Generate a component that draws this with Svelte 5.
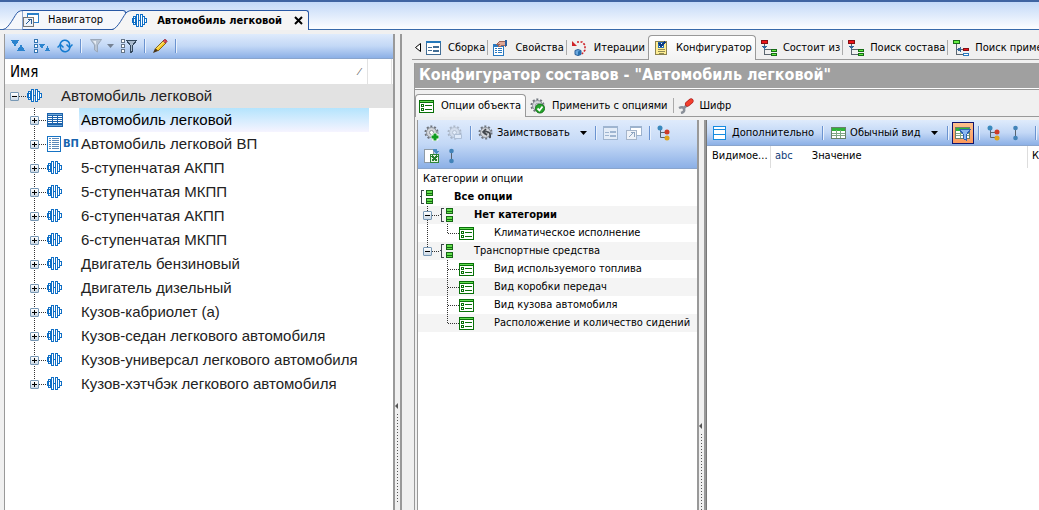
<script>
  // Product structure viewer: object tree on the left, option configurator on the right.
  const parts = [
    { name: 'Автомобиль легковой', icon: 'spec', selected: true },
    { name: 'Автомобиль легковой ВП', icon: 'sheet', badge: 'ВП' },
    { name: '5-ступенчатая АКПП', icon: 'part' },
    { name: '5-ступенчатая МКПП', icon: 'part' },
    { name: '6-ступенчатая АКПП', icon: 'part' },
    { name: '6-ступенчатая МКПП', icon: 'part' },
    { name: 'Двигатель бензиновый', icon: 'part' },
    { name: 'Двигатель дизельный', icon: 'part' },
    { name: 'Кузов-кабриолет (а)', icon: 'part' },
    { name: 'Кузов-седан легкового автомобиля', icon: 'part' },
    { name: 'Кузов-универсал легкового автомобиля', icon: 'part' },
    { name: 'Кузов-хэтчбэк легкового автомобиля', icon: 'part' },
  ];

  const views = [
    { name: 'Сборка', icon: 'form' },
    { name: 'Свойства', icon: 'props' },
    { name: 'Итерации', icon: 'iter' },
    { name: 'Конфигуратор', icon: 'config' },
    { name: 'Состоит из', icon: 'consists' },
    { name: 'Поиск состава', icon: 'consists' },
    { name: 'Поиск приме', icon: 'usage' },
  ];

  const pages = [
    { name: 'Опции объекта', icon: 'option' },
    { name: 'Применить с опциями', icon: 'gearok' },
    { name: 'Шифр', icon: 'wrench' },
  ];

  const options = [
    { name: 'Все опции', level: 0, bold: true },
    { name: 'Нет категории', level: 1, bold: true },
    { name: 'Климатическое исполнение', level: 2, last: true },
    { name: 'Транспортные средства', level: 1, last: true },
    { name: 'Вид используемого топлива', level: 2, final: true },
    { name: 'Вид коробки передач', level: 2, final: true },
    { name: 'Вид кузова автомобиля', level: 2, final: true },
    { name: 'Расположение и количество сидений', level: 2, last: true, final: true },
  ];

  const smooth = ['refresh', 'pencil', 'iter', 'gearok', 'wrench', 'gearadd', 'geardel', 'borrow', 'nodes', 'link', 'funnel'];

  let view = $state('Конфигуратор');
  let page = $state('Опции объекта');
</script>

{#snippet gear()}
  <circle cx="7.500" cy="7.500" r="6" fill="none" stroke="#6f747c" stroke-width="2" stroke-dasharray="2 1.77" />
  <circle cx="7.500" cy="7.500" r="5" fill="#d3d6db" stroke="#8b9098" />
  <circle cx="7.500" cy="7.500" r="2" fill="#fff" stroke="#8b9098" />
{/snippet}

{#snippet icon(name)}
  <svg class="icon" class:crisp={!smooth.includes(name)} width="16" height="16" viewBox="0 0 16 16" aria-hidden="true">
    {#if name === 'part'}
      <g fill="#fff" stroke="#0f6fc6">
        <path d="M1.500 3.500h2v8h-2zM10.500 3.500h2v8h-2zM12.500 5.500h2v4h-2z" />
        <path d="M0 5.500h3M0 9.500h3M.5 5v5M3 7.500h8" />
        <rect x="4.500" y="1.500" width="2" height="12" />
        <rect x="8.500" y="1.500" width="2" height="12" />
      </g>
    {:else if name === 'spec'}
      <path fill="#1d63ab" d="M0 1h16v14H0z" />
      <path fill="#6ea7d8" d="M1 2h14v1H1zM1 13h14v1H1z" />
      <path stroke="#fff" d="M1 4.500h4M6 4.500h4M11 4.500h4M1 6.500h4M6 6.500h4M11 6.500h4M1 8.500h4M6 8.500h4M11 8.500h4M1 10.500h4M6 10.500h4M11 10.500h4" />
    {:else if name === 'sheet'}
      <path fill="#fff" stroke="#1673c4" d="M.5.500h13v15H.5z" />
      <path stroke="#5b89ba" d="M2 2.500h2M5 2.500h7M2 4.500h2M5 4.500h7M2 6.500h2M5 6.500h7M2 8.500h2M5 8.500h7M2 10.500h2M5 10.500h7M2 12.500h2M5 12.500h7" />
    {:else if name === 'nav' || name === 'navoff'}
      {@const c = name === 'nav' ? '#2b7fc8' : '#9cb2cd'}
      <path fill="#fff" stroke={c} d="M4.500 1.500h11v9h-11z" />
      <path fill={c} d="M4 1h12v2H4z" />
      <path fill="#eef2f8" stroke={name === 'nav' ? '#777' : '#a5b5ca'} d="M.5 5.500h10v9H.5z" />
      <path fill="none" stroke={name === 'nav' ? '#245a92' : '#8fa5c0'} d="M3 12l5-5M4.500 7.500h4v4" />
    {:else if name === 'sort'}
      <path fill="#2b84cf" d="M0 2h8l-4 7zM6 13h8l-4-7z" />
    {:else if name === 'sortlist'}
      <path fill="#fff" stroke="#3577b3" d="M.5 1.500h3v3h-3zM.5 6.500h3v3h-3zM.5 11.500h3v3h-3z" />
      <path fill="#2b84cf" d="M5 6h6l-3 5zM11 13h5l-2.500-5z" />
    {:else if name === 'refresh'}
      <path fill="none" stroke="#147bd0" stroke-width="1.500" d="M3 7a5 5.500 0 0 1 9.500-1.500V9M13 9a5 5.500 0 0 1-9.500 1.500V7" />
      <path fill="none" stroke="#147bd0" stroke-width="1.500" d="M9.500 6.500l3 3 3-3M.5 9.500l3-3 3 3" />
    {:else if name === 'funnel'}
      <path fill="#b9c4d2" stroke="#9ba8b9" d="M2.500 1.500h11L9.500 7v7l-3-2V7z" />
      <path fill="#e8edf3" d="M5 3h3v4z" />
    {:else if name === 'filterlist'}
      <path fill="#fff" stroke="#667587" d="M.5 1.500h3v3h-3zM.5 6.500h3v3h-3zM.5 11.500h3v3h-3z" />
      <path fill="#a9bacd" stroke="#34495e" d="M5.500 2.500h10l-4 5v6l-2 1v-7z" />
    {:else if name === 'pencil'}
      <path fill="#f5c928" stroke="#8a6415" d="M3.500 10.500l8-8 2.500 2.500-8 8z" />
      <path fill="#4a3416" d="M1 15l2-4.500L6 13z" />
      <path fill="#df4052" stroke="#9a3040" d="M11 3l1.500-1.500Q14 1 15 3.500L13.500 5z" />
      <path stroke="#fff19d" d="M5 10.500l7-7" />
    {:else if name === 'form' || name === 'formoff'}
      {@const c = name === 'form' ? '#426d94' : '#9fb5d0'}
      <path fill={name === 'form' ? '#fff' : '#e4edf8'} stroke={c} d="M.5 1.500h14v13H.5z" />
      <path fill={name === 'form' ? '#2478ba' : c} d="M0 1h15v2H0z" />
      <path fill="none" stroke={c} d="M2 7.500h4M2 10.500h4M7.500 6.500h5v1h-5zM7.500 10.500h5v1h-5z" />
    {:else if name === 'props'}
      <path fill="#fff" stroke="#2979c0" d="M.5 4.500h10v11H.5z" />
      <path fill="#2979c0" d="M0 4h11v3H0z" />
      <path stroke="#2979c0" d="M2 8.500h2M5 8.500h4M2 10.500h2M5 10.500h4M2 12.500h2M5 12.500h4" />
      <path fill="#e0a896" stroke="#9a6257" d="M4 4l3-3h5v5l-3-1-2 2-2-1 2-2z" />
      <path fill="#295fa1" d="M12 0h2v6h-2z" />
    {:else if name === 'iter'}
      <path fill="none" stroke="#cf2429" stroke-width="1.600" stroke-dasharray="2 1.500" d="M5 2h5l3 3v5l-3 4" />
      <path fill="#cf2429" d="M0 1v5h5z" />
      <path fill="#69a8df" stroke="#285d98" d="M3 10.500l3-1 3 1v4l-3 1-3-1z" />
      <path fill="#276fae" d="M6 11.500l3-1v4l-3 1z" />
    {:else if name === 'config'}
      <path fill="#ffee93" stroke="#8d8350" d="M1.500 1.500h11v13h-11z" />
      <path fill="#fff" stroke="#2670b5" d="M4.500 2.500h5v5h-5z" />
      <path fill="none" stroke="#0b3b85" stroke-width="2" d="M5 3l2 3 4-4" />
      <path stroke="#8f8b55" d="M4 9.500h7M4 11.500h7M5 13.500h5" />
    {:else if name === 'consists' || name === 'usage'}
      <path fill="none" stroke="#5b6670" d="M3.500 4v10.500H10M3.500 9.500H10" />
      {#if name === 'consists'}
        <path fill="#f0151b" stroke="#830f13" d="M.5.500h6v3h-6z" />
        <path fill="#32699e" d="M1 6h5l-2.500 4z" />
        <path fill="#65ed42" stroke="#176d17" d="M10.500 9.500h5v2h-5zM10.500 13.500h5v2h-5z" />
      {:else}
        <path fill="#65ed42" stroke="#176d17" d="M.5.500h6v3h-6z" />
        <path fill="#32699e" d="M4 9.500l4-3v6z" />
        <path fill="#f0151b" stroke="#830f13" d="M10.500 8.500h5v2h-5z" />
        <path fill="#fff" stroke="#287ac0" d="M10.500 13.500h5v2h-5z" />
      {/if}
    {:else if name === 'option'}
      <path fill="#fff" stroke="#087008" d="M.5 2.500h14v12H.5z" />
      <path fill="#62dc51" stroke="#087008" d="M.5 2.500h14v2H.5z" />
      <path fill="#fff" stroke="#087008" d="M2.500 6.500h2v2h-2zM2.500 10.500h2v2h-2zM6 7.500h7M6 11.500h7" />
    {:else if name === 'group'}
      <path fill="none" stroke="#3e464d" d="M5 1.500H2.500v6H1M2.500 7v7.500H5" />
      <path fill="#63df4b" stroke="#176717" d="M7.500 1.500h6v3h-6zM7.500 4.500h6v2h-6zM7.500 9.500h6v3h-6zM7.500 12.500h6v2h-6z" />
    {:else if name === 'gearok'}
      {@render gear()}
      <circle cx="10" cy="10.500" r="4.500" fill="#24a62b" stroke="#137018" />
      <path fill="none" stroke="#fff" stroke-width="1.800" d="M7.500 10.500l2 2 3-4" />
    {:else if name === 'gearadd'}
      {@render gear()}
      <path stroke="#fff" stroke-width="5" d="M7 12h8M11 8v8" />
      <path stroke="#119c20" stroke-width="3" d="M7.500 12h7M11 8.500v7" />
    {:else if name === 'geardel'}
      <g opacity=".4">{@render gear()}<path fill="#fff" stroke="#8292a5" d="M7.500 9.500h7v4h-7z" /></g>
    {:else if name === 'borrow'}
      {@render gear()}
      <path fill="none" stroke="#41464c" stroke-width="1.600" d="M12 13c1-5-1-7-6-6M8 4L5 7l4 3" />
    {:else if name === 'wrench'}
      <path fill="none" stroke="#8a9099" stroke-width="2.500" d="M9 7l-4 4M1 10q4-2 5 1t-3 4" />
      <path stroke="#a91919" stroke-width="5" stroke-linecap="round" d="M9.500 6l3.500-3" />
      <path stroke="#f2402e" stroke-width="4" stroke-linecap="round" d="M9.500 6l3.500-3" />
    {:else if name === 'nodes'}
      <path fill="none" stroke="#59636d" d="M3.500 3v9.500H10M3.500 7.500H10" />
      <circle cx="3" cy="3" r="2.500" fill="#3a89bd" />
      <circle cx="10" cy="7" r="2.500" fill="#cf3b27" />
      <circle cx="10" cy="13" r="2.500" fill="#dfa31a" />
    {:else if name === 'link'}
      <path stroke="#59636d" d="M4.500 3v10" />
      <circle cx="4.500" cy="3" r="2.300" fill="#4283b8" />
      <circle cx="4.500" cy="13" r="2.300" fill="#4283b8" />
    {:else if name === 'excel'}
      <path fill="#fff" stroke="#8f9ba6" d="M.5 1.500h9v13h-9z" />
      <path fill="#4a8dc4" d="M9 1h4v2h2l-3 3-3-3z" />
      <path fill="#e9f5e5" stroke="#308638" d="M6.500 6.500h8v8h-8z" />
      <path stroke="#267c2e" stroke-width="2" d="M8 8l5 5M13 8l-5 5" />
    {:else if name === 'panel'}
      <path fill="#fff" stroke="#168be0" d="M.5 1.500h12v13H.5z" />
      <path stroke="#168be0" d="M0 4.500h13M0 9.500h13" />
    {:else if name === 'grid' || name === 'gridfilter'}
      <path fill="#fff" stroke="#68806b" d="M.5 2.500h14v11H.5z" />
      <path fill="#2eb438" d="M1 3h13v3H1z" />
      <path fill="none" stroke="#7fa684" d="M1 8.500h13M1 10.500h13M5.500 5v8M9.500 5v8" />
      {#if name === 'gridfilter'}
        <path fill="#8ab8f0" stroke="#2b62b4" d="M4.500 4.500h11l-4 5v6l-3-2v-4z" />
      {/if}
    {/if}
  </svg>
{/snippet}

{#snippet tool(name, label)}
  <button class="tool" aria-label={label} title={label}>{@render icon(name)}</button>
{/snippet}

{#snippet arrow()}
  <svg class="arrow" width="7" height="4" viewBox="0 0 7 4" aria-hidden="true"><path d="M0 0h7L3.500 4z" /></svg>
{/snippet}

<div class="window">
  <nav class="docs">
    <span class="lead"></span>
    <button class="doc">
      <svg class="slope" width="20" height="20" viewBox="0 0 20 20"><path d="M0 19.500C6 19 12 4 15 2Q17 .5 20 .5V20H0z" /></svg>
      <span class="doc-body first">{@render icon('nav')}Навигатор</span>
    </button>
    <button class="doc active">
      <svg class="slope" width="20" height="20" viewBox="0 0 20 20"><path class="fill" d="M0 20C6 19 12 4 15 2Q17 .5 20 .5V20z" /><path class="line" d="M0 19.500C6 19 12 4 15 2Q17 .5 20 .5" /></svg>
      <span class="doc-body">{@render icon('part')}Автомобиль легковой
        <svg class="close" width="9" height="9" viewBox="0 0 9 9" aria-hidden="true"><path d="M1 1l7 7M8 1L1 8" /></svg>
      </span>
    </button>
    <span class="rest"></span>
  </nav>

  <main>
    <section class="structure">
      <div class="toolbar compact">
        {@render tool('sort', 'Сортировка')}
        {@render tool('sortlist', 'Сортировка списка')}
        {@render tool('refresh', 'Обновить')}
        <i class="sep"></i>
        <button class="tool text faded" aria-label="Фильтр">{@render icon('funnel')}{@render arrow()}</button>
        {@render tool('filterlist', 'Фильтр списка')}
        <i class="sep"></i>
        {@render tool('pencil', 'Изменить')}
        <i class="sep"></i>
      </div>
      <div class="name-head"><span class="col">Имя <em>⁄</em></span></div>
      <ul class="tree">
        <li class="root">
          <button class="expander" aria-label="Свернуть"></button><i class="dots"></i>
          {@render icon('part')}
          <span class="name">Автомобиль легковой</span>
        </li>
        {#each parts as p, i}
          <li class:selected={p.selected} class:end={i === parts.length - 1}>
            <span class="guide"><button class="expander plus" aria-label="Развернуть"></button></span><i class="dots"></i>
            {@render icon(p.icon)}
            <b class="badge">{p.badge ?? ''}</b>
            <span class="name">{p.name}</span>
          </li>
        {/each}
      </ul>
    </section>

    <div class="splitter"><span class="grip"></span></div>

    <section class="viewer">
      <div class="tabs views">
        <svg class="back" width="6" height="9" viewBox="0 0 6 9" aria-hidden="true"><path d="M5.500 .5v8l-5-4z" /></svg>
        {#each views as v}
          <button class="tab" class:on={view === v.name} onclick={() => (view = v.name)}>
            {@render icon(v.icon)}<span>{v.name}</span>
          </button>
        {/each}
      </div>

      <div class="frame">
        <h1>Конфигуратор составов - "Автомобиль легковой"</h1>
        <div class="tabs pages">
          {#each pages as p}
            <button class="tab" class:on={page === p.name} onclick={() => (page = p.name)}>
              {@render icon(p.icon)}<span>{p.name}</span>
            </button>
          {/each}
        </div>

        <div class="panes">
          <section class="options">
            <div class="toolbar wrap">
              {@render tool('gearadd', 'Добавить')}
              {@render tool('geardel', 'Удалить')}
              <i class="sep"></i>
              <button class="tool text">{@render icon('borrow')}<span>Заимствовать</span>{@render arrow()}</button>
              <i class="sep"></i>
              {@render tool('formoff', 'Карточка')}
              {@render tool('navoff', 'Открыть')}
              <i class="sep"></i>
              {@render tool('nodes', 'Структура')}
              {@render tool('excel', 'Экспорт')}
              {@render tool('link', 'Связи')}
            </div>
            <div class="options-head">Категории и опции</div>
            <ul class="options-list">
              {#each options as o}
                <li class="l{o.level}" class:bold={o.bold} class:last={o.last} class:final={o.final}>
                  {#if o.level === 1}
                    <span class="guide"><button class="expander" aria-label="Свернуть"></button></span><i class="dots"></i>
                  {:else if o.level === 2}
                    <span class="outer"></span><span class="guide inner"></span><i class="dots long"></i>
                  {/if}
                  {@render icon(o.level === 2 ? 'option' : 'group')}
                  <span class="name">{o.name}</span>
                </li>
              {/each}
            </ul>
          </section>

          <div class="splitter"><span class="grip low"></span></div>

          <section class="values">
            <div class="toolbar">
              <button class="tool text">{@render icon('panel')}<span>Дополнительно</span></button>
              <i class="sep"></i>
              <button class="tool text">{@render icon('grid')}<span>Обычный вид</span>{@render arrow()}</button>
              <span class="toggle">
                <i class="sep"></i>
                <button class="tool pressed" aria-label="Фильтр значений" aria-pressed="true">{@render icon('gridfilter')}</button>
                <i class="sep"></i>
              </span>
              {@render tool('nodes', 'Структура')}
              {@render tool('link', 'Связи')}
              <i class="sep"></i>
            </div>
            <table>
              <thead>
                <tr><th class="visible">Видимое...</th><th class="value"><span class="abc">abc</span>Значение</th><th>К</th></tr>
              </thead>
            </table>
          </section>
        </div>
      </div>
    </section>
  </main>
</div>

<style>
  :global(body) { background: #f0f0f0; }
  .window {
    display: flex; flex-direction: column; height: 100vh; overflow: hidden; color: #000;
    font: 11px/16px Tahoma, "DejaVu Sans Condensed", "Noto Sans", sans-serif;
  }
  button { margin: 0; padding: 0; border: 0; background: none; font: inherit; color: inherit; white-space: nowrap; }
  ul { margin: 0; padding: 0; list-style: none; }
  svg { display: block; flex: none; }
  .crisp { shape-rendering: crispEdges; }

  /* document tabs */
  .docs {
    display: flex; align-items: flex-end; flex: none; height: 28px; border-top: 2px solid #3f64a2;
    background: linear-gradient(#c3d9f8, #fff);
  }
  .lead, .rest { align-self: stretch; border-bottom: 1px solid #386aaa; }
  .lead { width: 3px; }
  .rest { flex: 1; }
  .doc { display: flex; height: 20px; }
  .slope path { fill: #f5f7fb; stroke: #2858a5; }
  .slope .fill { fill: #f5f5f5; stroke: none; }
  .slope .line { fill: none; }
  .doc-body {
    display: flex; align-items: center; gap: 9px; box-sizing: border-box; height: 20px; padding-right: 22px;
    border: solid #2858a5; border-width: 1px 0; background: #f5f7fb;
  }
  .first { border-right-width: 1px; border-top-right-radius: 3px; }
  .doc.active { margin-left: -14px; font-weight: bold; }
  .active .doc-body { padding-right: 5px; border-width: 1px 1px 0 0; border-top-right-radius: 3px; background: #f5f5f5; }
  .close { margin-left: 3px; stroke: #000; stroke-width: 2; }

  main { display: flex; flex: 1; min-height: 0; padding-top: 4px; }

  .toolbar {
    display: flex; align-items: center; flex: none; gap: 8px; box-sizing: border-box; height: 25px; padding: 0 6px;
    border-bottom: 1px solid #8aa5cd; background: linear-gradient(#dfebfc, #c3d8f6 50%, #8cb0e6);
  }
  .compact { gap: 7px; }
  .tool { flex: none; }
  .tool.text { display: flex; align-items: center; gap: 3px; }
  .text span + .arrow { margin: 0 1px 0 7px; }
  .sep { flex: none; width: 1px; height: 14px; background: #6a93d0; box-shadow: 1px 0 #e9f1fc; }
  .faded .arrow { opacity: .4; }

  .structure {
    display: flex; flex-direction: column; flex: none; box-sizing: border-box; width: 391px; margin-left: 4px;
    border: solid #999; border-width: 0 2px 0 1px; background: #fff;
  }
  .name-head { flex: none; height: 25px; margin-right: 1px; padding: 0 23px 0 5px; border-right: 1px solid #e2e2e2; font-size: 15px; }
  .col { display: flex; align-items: center; height: 25px; border-right: 1px solid #e2e2e2; }
  .col em { margin: 0 7px 0 auto; font-size: 9px; color: #555; }
  .tree { font: 15px/24px "Liberation Sans", Arial, sans-serif; color: #222; }
  .tree li { display: flex; align-items: center; height: 24px; padding-left: 25px; }
  .tree .root { padding-left: 5px; background: #e2e2e2; }
  .root .name { margin-left: 18px; }
  .tree li .icon { margin-left: 1px; }
  .badge { width: 16px; font: bold 10px/14px "DejaVu Sans", sans-serif; color: #1763ae; }
  .selected .name { flex: 1; margin-right: 24px; background: linear-gradient(#b4e4fd, #f6f4ff); color: #000; }
  .tree li:not(.root) .name { padding-left: 2px; }

  .guide {
    display: flex; align-items: center; align-self: stretch; flex: none; width: 9px;
    background: repeating-linear-gradient(#333 0 1px, transparent 1px 2px) 4px 0 / 1px 100% no-repeat;
  }
  .end .guide, .last .guide { background-size: 1px 50%; }
  .dots { flex: none; width: 7px; height: 1px; background: repeating-linear-gradient(90deg, #333 0 1px, transparent 1px 2px); }
  .expander {
    flex: none; box-sizing: border-box; width: 9px; height: 9px; border: 1px solid #7898b5; border-radius: 1px;
    background: linear-gradient(#000, #000) center / 5px 1px no-repeat, linear-gradient(#fff, #cbd8e5);
  }
  .plus {
    background: linear-gradient(#000, #000) center / 5px 1px no-repeat, linear-gradient(#000, #000) center / 1px 5px no-repeat,
      linear-gradient(#fff, #cbd8e5);
  }

  .splitter { position: relative; flex: none; box-sizing: border-box; width: 7px; border-right: 2px solid #999; }
  .grip {
    position: absolute; left: 2px; bottom: 6px; width: 1px; height: 90px;
    background: repeating-linear-gradient(#555 0 1px, transparent 1px 3px);
  }
  .grip::before {
    content: ""; position: absolute; left: -2px; top: -11px; border: 3px solid transparent;
    border-left: 0; border-right-color: #555;
  }
  .low { bottom: 0; height: 76px; }

  /* viewer */
  .viewer { display: flex; flex-direction: column; flex: 1; min-width: 0; padding-left: 10px; }
  .tabs { display: flex; flex: none; overflow: hidden; box-shadow: inset 0 -1px #999; }
  .views { height: 25px; padding: 1px 0 0 3px; }
  .back { align-self: center; fill: #fff; stroke: #000; }
  .tab {
    display: flex; align-items: center; flex: none; gap: 6px; padding: 0 3px 0 5px;
    background: linear-gradient(#aaa, #aaa) right center / 1px 15px no-repeat;
  }
  .tab:has(+ .on), .tab:last-child { background: none; }
  .tab.on { border: 1px solid #999; border-bottom: 0; border-radius: 4px 4px 0 0; background: linear-gradient(#fff, #f3f3f3); }

  .frame {
    display: flex; flex-direction: column; flex: 1; min-height: 0; margin: 3px 0 0 2px; border-left: 1px solid #999;
  }
  h1 {
    flex: none; height: 26px; margin: 0; padding-left: 4px; border-bottom: 1px solid #999; box-shadow: inset 0 -1px #fff;
    background: #a0a0a0; color: #fff; font-size: 16px; line-height: 24px; white-space: nowrap; overflow: hidden;
  }
  .pages { height: 23px; margin-top: 4px; }
  .pages .tab { padding: 0 6px 0 4px; }
  .pages .on { padding: 0 4px 0 3px; }

  .panes { display: flex; flex: 1; min-height: 0; padding: 3px 0 0 2px; }
  .options {
    display: flex; flex-direction: column; flex: none; box-sizing: border-box; width: 282px;
    border: solid #999; border-width: 0 2px 0 1px; background: #fff;
  }
  .wrap { flex-wrap: wrap; align-content: center; gap: 7px; height: 49px; }
  .options-head { flex: none; height: 19px; padding-left: 5px; line-height: 20px; }
  .options-list { line-height: 18px; }
  .options-list li { display: flex; align-items: center; height: 18px; padding-left: 5px; }
  .options-list li:nth-child(even) { background: #f4f4f4; }
  .options-list .l0 { padding-left: 1px; }
  .bold { font-weight: bold; }
  .outer {
    align-self: stretch; flex: none; width: 20px;
    background: repeating-linear-gradient(#333 0 1px, transparent 1px 2px) 4px 0 / 1px 100% no-repeat;
  }
  .final .outer { background: none; }
  .options-list .inner { width: 5px; }
  .long { width: 11px; }
  .options-list .name { margin-left: 19px; white-space: nowrap; }

  .values { flex: 1; min-width: 0; border-left: 1px solid #777; background: #fff; }
  .values .toolbar { height: 26px; padding-right: 0; overflow: hidden; }
  .toggle { display: flex; align-items: center; flex: none; gap: 4px; }
  .pressed { padding: 2px; border: 1px solid #10146e; background: linear-gradient(#fdc08d, #fd9a5c); }
  table { width: 100%; border-collapse: collapse; table-layout: fixed; }
  th { height: 19px; padding: 0 4px 3px; border-right: 1px solid #ddd; font-weight: normal; text-align: left; white-space: nowrap; }
  th:first-child { padding-left: 5px; }
  th:last-child { padding-right: 0; border: 0; }
  .visible { width: 54px; }
  .value { width: 248px; }
  .abc { margin-right: 19px; color: #103c78; }
</style>
